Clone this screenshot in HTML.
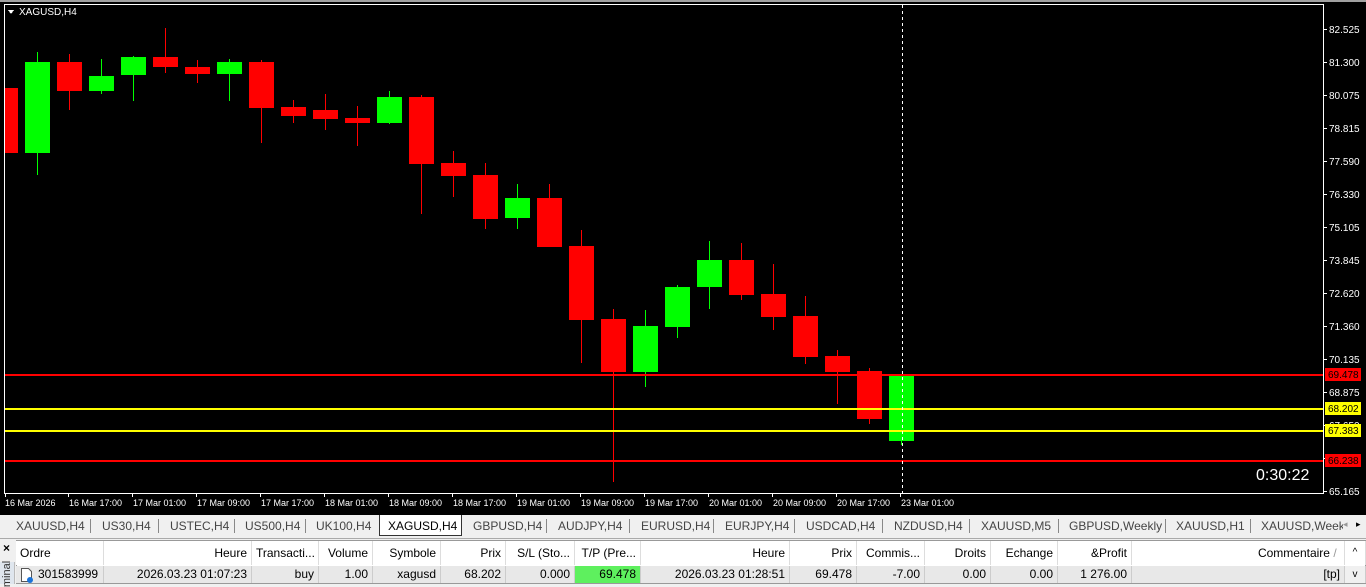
<!DOCTYPE html>
<html><head><meta charset="utf-8"><style>
*{margin:0;padding:0;box-sizing:border-box}
body{width:1366px;height:584px;overflow:hidden;background:#f0f0f0;font-family:"Liberation Sans",sans-serif;position:relative}
.t{position:absolute;font-size:12px;color:#444;top:519px;white-space:nowrap}
.sep{position:absolute;top:519px;width:1px;height:14px;background:#888}
.h{position:absolute;top:541px;height:24px;font-size:12px;color:#000;line-height:24px;border-right:1px solid #ddd;background:#fff;padding:0 4px;white-space:nowrap;overflow:hidden}
.r{position:absolute;top:566px;height:17px;font-size:12px;color:#000;line-height:17px;background:#e8e8e8;border-right:1px solid #ccc;padding:0 4px;white-space:nowrap;overflow:hidden;text-align:right}
</style></head><body>
<svg width="1366" height="515" style="position:absolute;left:0;top:0" font-family="Liberation Sans,sans-serif" shape-rendering="crispEdges">
<rect x="0" y="0" width="1366" height="515" fill="#000"/>
<rect x="0" y="0" width="1366" height="2" fill="#a0a0a0"/>
<rect x="4.5" y="4.5" width="1319" height="489" fill="none" stroke="#fff" stroke-width="1"/>
<polygon points="8,10 14,10 11,14" fill="#fff"/>
<text x="19" y="15" font-size="10" fill="#fff">XAGUSD,H4</text>
<g id="c"></g>
<g stroke-width="2">
<line x1="5" y1="375" x2="1323" y2="375" stroke="#f00"/>
<line x1="5" y1="409" x2="1323" y2="409" stroke="#ff0"/>
<line x1="5" y1="431" x2="1323" y2="431" stroke="#ff0"/>
<line x1="5" y1="461" x2="1323" y2="461" stroke="#f00"/>
</g>
<line x1="902.5" y1="5" x2="902.5" y2="493" stroke="#fff" stroke-dasharray="3,3"/>
<g fill="#fff" font-size="10" id="ax"></g>
<rect x="1325" y="368" width="36" height="13" fill="#f00"/><text x="1328" y="378" font-size="10" fill="#000">69.478</text>
<rect x="1325" y="402" width="36" height="13" fill="#ff0"/><text x="1328" y="412" font-size="10" fill="#000">68.202</text>
<rect x="1325" y="424" width="36" height="13" fill="#ff0"/><text x="1328" y="434" font-size="10" fill="#000">67.383</text>
<rect x="1325" y="454" width="36" height="13" fill="#f00"/><text x="1328" y="464" font-size="10" fill="#000">66.238</text>
<text x="1256" y="480" font-size="16" fill="#fff">0:30:22</text>
</svg>
<div style="position:absolute;left:0;top:514px;width:1366px;height:1px;background:#000"></div>
<div style="position:absolute;left:379px;top:515px;width:83px;height:21px;background:#fff;border:1px solid #333;border-top:none"></div>
<div class="t" style="left:16px">XAUUSD,H4</div><div class="sep" style="left:90px"></div>
<div class="t" style="left:102px">US30,H4</div><div class="sep" style="left:158px"></div>
<div class="t" style="left:170px">USTEC,H4</div><div class="sep" style="left:234px"></div>
<div class="t" style="left:245px">US500,H4</div><div class="sep" style="left:305px"></div>
<div class="t" style="left:316px">UK100,H4</div>
<div class="t" style="left:388px;color:#000">XAGUSD,H4</div>
<div class="t" style="left:473px">GBPUSD,H4</div><div class="sep" style="left:546px"></div>
<div class="t" style="left:558px">AUDJPY,H4</div><div class="sep" style="left:629px"></div>
<div class="t" style="left:641px">EURUSD,H4</div><div class="sep" style="left:713px"></div>
<div class="t" style="left:725px">EURJPY,H4</div><div class="sep" style="left:794px"></div>
<div class="t" style="left:806px">USDCAD,H4</div><div class="sep" style="left:882px"></div>
<div class="t" style="left:894px">NZDUSD,H4</div><div class="sep" style="left:969px"></div>
<div class="t" style="left:981px">XAUUSD,M5</div><div class="sep" style="left:1058px"></div>
<div class="t" style="left:1069px">GBPUSD,Weekly</div><div class="sep" style="left:1165px"></div>
<div class="t" style="left:1176px">XAUUSD,H1</div><div class="sep" style="left:1250px"></div>
<div class="t" style="left:1261px;width:82px;overflow:hidden">XAUUSD,Weekly</div>
<div class="t" style="left:1343px;font-size:9px;color:#999">◂</div><div class="t" style="left:1356px;font-size:9px;color:#000">▸</div>
<div style="position:absolute;left:0;top:538px;width:1366px;height:1px;background:#aaa"></div>
<div style="position:absolute;left:3px;top:541px;font-size:12px;font-weight:bold">×</div>
<div style="position:absolute;left:0;top:562px;width:15px;height:22px;background:#dfe6ee;border-right:1px solid #bbb"></div>
<div style="position:absolute;left:-6px;top:568px;font-size:11px;transform:rotate(-90deg);color:#333">minal</div>
<div style="position:absolute;left:16px;top:540px;width:1350px;height:44px;background:#fff;border:1px solid #999"></div>
<div class="h" style="left:16px;width:88px">Ordre</div>
<div class="h" style="left:104px;width:148px;text-align:right">Heure</div>
<div class="h" style="left:252px;width:67px">Transacti...</div>
<div class="h" style="left:319px;width:54px;text-align:right">Volume</div>
<div class="h" style="left:373px;width:68px;text-align:right">Symbole</div>
<div class="h" style="left:441px;width:65px;text-align:right">Prix</div>
<div class="h" style="left:506px;width:69px;text-align:right">S/L (Sto...</div>
<div class="h" style="left:575px;width:66px;text-align:right">T/P (Pre...</div>
<div class="h" style="left:641px;width:149px;text-align:right">Heure</div>
<div class="h" style="left:790px;width:67px;text-align:right">Prix</div>
<div class="h" style="left:857px;width:68px;text-align:right">Commis...</div>
<div class="h" style="left:925px;width:66px;text-align:right">Droits</div>
<div class="h" style="left:991px;width:67px;text-align:right">Echange</div>
<div class="h" style="left:1058px;width:74px;text-align:right">&amp;Profit</div>
<div class="h" style="left:1132px;width:213px;text-align:right">Commentaire <span style="color:#999">/</span>&nbsp;</div>
<div class="h" style="left:1345px;width:21px;text-align:center;font-size:10px">^</div>
<div class="r" style="left:16px;width:88px;text-align:left;padding-left:22px">301583999</div>
<svg style="position:absolute;left:20px;top:567px" width="14" height="16"><path d="M1.5 1.5h7l3 3v10h-10z" fill="#fff" stroke="#555"/><circle cx="10" cy="13" r="3" fill="#1a73d9"/></svg>
<div class="r" style="left:104px;width:148px">2026.03.23 01:07:23</div>
<div class="r" style="left:252px;width:67px">buy</div>
<div class="r" style="left:319px;width:54px">1.00</div>
<div class="r" style="left:373px;width:68px">xagusd</div>
<div class="r" style="left:441px;width:65px">68.202</div>
<div class="r" style="left:506px;width:69px">0.000</div>
<div class="r" style="left:575px;width:66px;background:#5ef05e">69.478</div>
<div class="r" style="left:641px;width:149px">2026.03.23 01:28:51</div>
<div class="r" style="left:790px;width:67px">69.478</div>
<div class="r" style="left:857px;width:68px">-7.00</div>
<div class="r" style="left:925px;width:66px">0.00</div>
<div class="r" style="left:991px;width:67px">0.00</div>
<div class="r" style="left:1058px;width:74px">1 276.00</div>
<div class="r" style="left:1132px;width:213px">[tp]</div>
<div class="r" style="left:1345px;width:21px;text-align:center;font-size:10px;background:#f0f0f0">v</div>
<script>
var d=[[5,0,88,153,75,153],[25,1,62,153,52,175],[57,0,62,91,54,110],[89,1,76,91,59,94],[121,1,57,75,56,101],[153,0,57,67,28,73],[185,0,67,74,60,83],[217,1,62,74,59,101],[249,0,62,108,60,143],[281,0,107,116,100,123],[313,0,110,119,94,130],[345,0,118,123,106,146],[377,1,97,123,91,124],[409,0,97,164,95,214],[441,0,163,176,151,197],[473,0,175,219,163,229],[505,1,198,218,184,229],[537,0,198,247,184,247],[569,0,246,320,230,363],[601,0,319,372,309,482],[633,1,326,372,310,387],[665,1,287,327,285,338],[697,1,260,287,241,309],[729,0,260,295,243,300],[761,0,294,317,264,330],[793,0,316,357,296,364],[825,0,356,372,350,404],[857,0,371,419,368,424],[889,1,376,441,376,445]];
var s='';d.forEach(function(c,i){var col=c[1]?'#0f0':'#f00';var w=i==0?13:25;var cx=i==0?5:c[0]+12;
if(i>0)s+='<rect x="'+cx+'" y="'+c[4]+'" width="1" height="'+(c[5]-c[4])+'" fill="'+col+'"/>';
s+='<rect x="'+c[0]+'" y="'+c[2]+'" width="'+w+'" height="'+(c[3]-c[2])+'" fill="'+col+'"/>';});
document.getElementById('c').innerHTML=s;
var p=['82.525','81.300','80.075','78.815','77.590','76.330','75.105','73.845','72.620','71.360','70.135','68.875','67.650','66.390','65.165'];
var a='<rect x="1323" y="4" width="1" height="490" fill="#fff"/><rect x="5" y="493" width="1319" height="1" fill="#fff"/>';
p.forEach(function(v,i){var y=29+i*33;a+='<rect x="1323" y="'+y+'" width="4" height="1"/><text x="1329" y="'+(y+4)+'">'+v+'</text>';});
var tl=['16 Mar 2026','16 Mar 17:00','17 Mar 01:00','17 Mar 09:00','17 Mar 17:00','18 Mar 01:00','18 Mar 09:00','18 Mar 17:00','19 Mar 01:00','19 Mar 09:00','19 Mar 17:00','20 Mar 01:00','20 Mar 09:00','20 Mar 17:00','23 Mar 01:00'];
tl.forEach(function(v,i){var x=5+i*64;a+='<rect x="'+(i==0?5:x-1)+'" y="493" width="1" height="4"/><text x="'+x+'" y="506" font-size="9">'+v+'</text>';});
document.getElementById('ax').innerHTML=a;
</script>
</body></html>
